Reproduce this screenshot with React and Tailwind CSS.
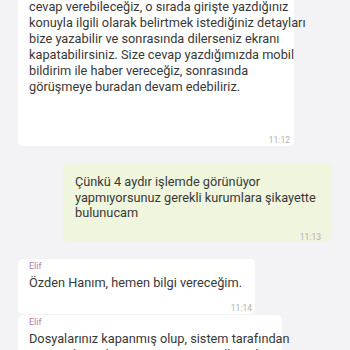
export default function App() {
  const font = { fontFamily: 'Roboto, "Liberation Sans", sans-serif' };
  return (
    <div className="w-[350px] h-[350px] overflow-hidden bg-[#f3f2f5] text-[#383838]" style={font}>
      <div className="flex flex-col items-start pl-[18px]">
        <div className="w-[276px] bg-white rounded-b-[5px] pl-[11px] pr-[4px] pb-[1px] -mt-px">
          <p className="text-[12.75px] leading-[16px] whitespace-nowrap">
            cevap verebileceğiz, o sırada girişte yazdığınız<br />
            konuyla ilgili olarak belirtmek istediğiniz detayları<br />
            bize yazabilir ve sonrasında dilerseniz ekranı<br />
            kapatabilirsiniz. Size cevap yazdığımızda mobil<br />
            bildirim ile haber vereceğiz, sonrasında<br />
            görüşmeye buradan devam edebiliriz.
          </p>
          <div className="mt-[40px] text-right text-[8.5px] leading-[10px] text-[#b0b0b0]">11:12</div>
        </div>

        <div className="mt-[17px] ml-[45px] w-[269px] bg-[#f0f5dd] rounded-[5px] pl-[12px] pr-[11px] pt-[11px]">
          <p className="text-[12.75px] leading-[15.5px] whitespace-nowrap">
            Çünkü 4 aydır işlemde görünüyor<br />
            yapmıyorsunuz gerekli kurumlara şikayette<br />
            bulunucam
          </p>
          <div className="mt-[11px] text-right text-[8.5px] leading-[10px] text-[#b0b0b0]">11:13</div>
        </div>

        <div className="mt-[17px] w-[237px] bg-white rounded-[5px] pl-[11px] pr-[3px] pt-[2px] pb-[1px]">
          <div className="text-[9px] leading-[10px] text-[#b27cb5]">Elif</div>
          <p className="mt-[4px] text-[12.75px] leading-[16px] whitespace-nowrap">Özden Hanım, hemen bilgi vereceğim.</p>
          <div className="mt-[12px] text-right text-[8.5px] leading-[10px] text-[#b0b0b0]">11:14</div>
        </div>

        <div className="mt-px w-[264px] bg-white rounded-[5px] pl-[11px] pr-[3px] pt-[2px] pb-[4px]">
          <div className="text-[9px] leading-[10px] text-[#b27cb5]">Elif</div>
          <p className="mt-[4px] text-[12.75px] leading-[16px] whitespace-nowrap">
            Dosyalarınız kapanmış olup, sistem tarafından<br />
            otomatik Kredi Kayıt Bürosu güncellemeleri<br />
            yapılmaktadır.
          </p>
        </div>
      </div>
    </div>
  );
}
